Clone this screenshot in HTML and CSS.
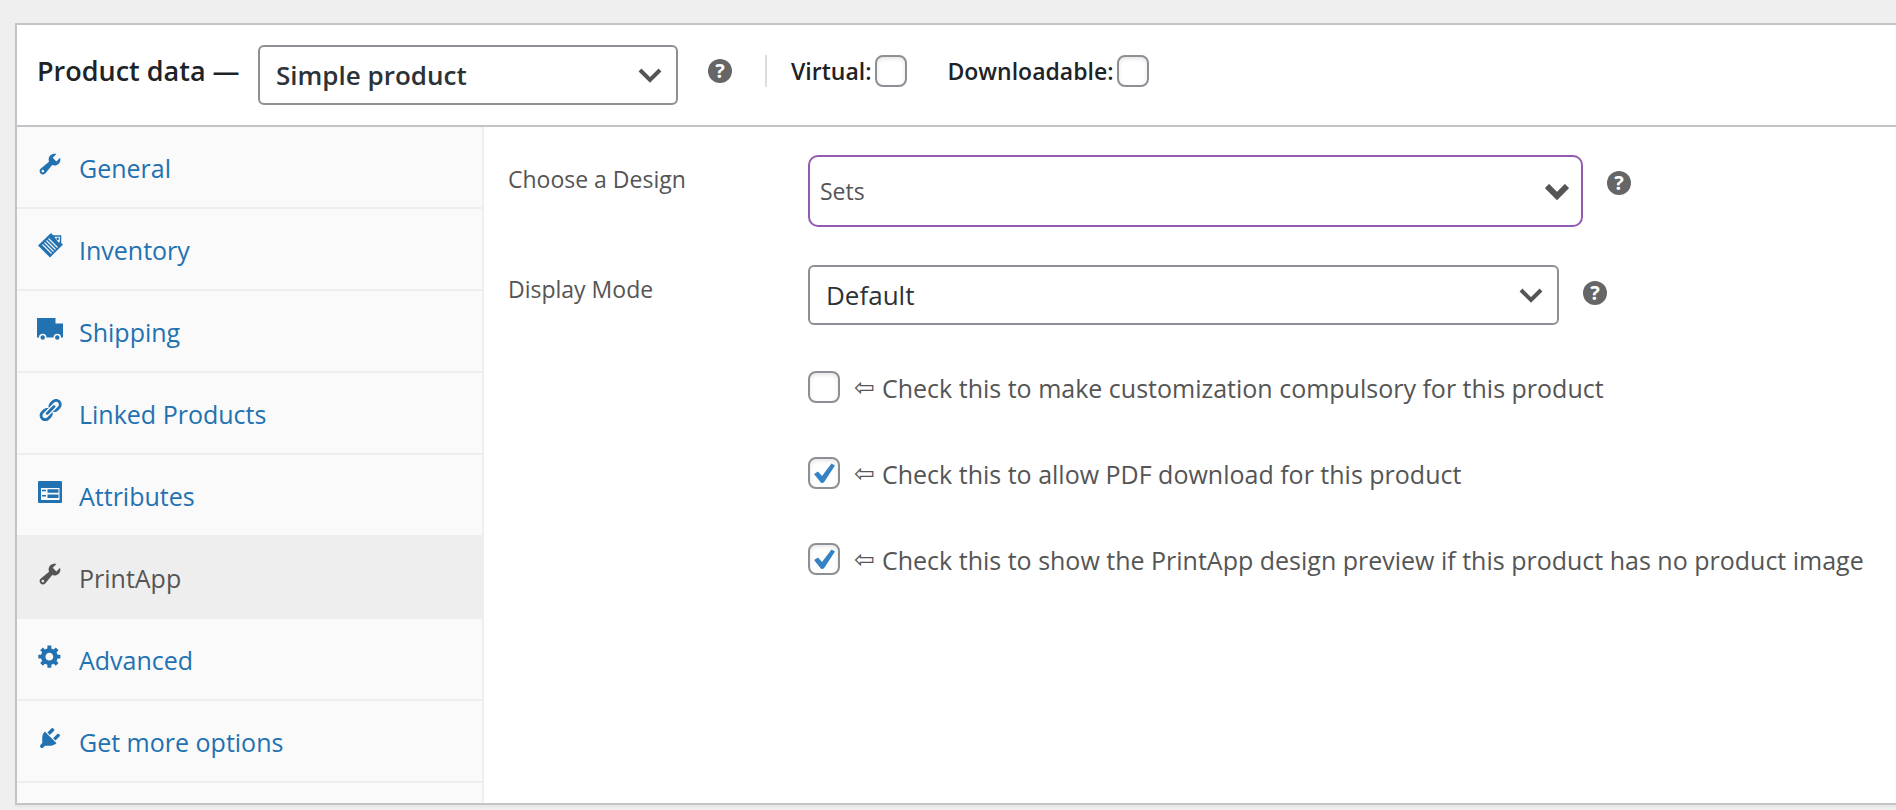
FILE: index.html
```html
<!DOCTYPE html>
<html lang="en">
<head>
<meta charset="utf-8">
<title>Product data</title>
<meta name="viewport" content="width=device-width, initial-scale=1">
<link rel="stylesheet" href="styles.css">
</head>
<body>
<svg class="sprite" aria-hidden="true">
  <symbol id="wrench" viewBox="0 0 20 20"><path d="M16.68 9.77c-1.34 1.34-3.3 1.67-4.95.99l-5.41 6.52c-.99.99-2.59.99-3.58 0s-.99-2.59 0-3.57l6.52-5.42c-.68-1.65-.35-3.61.99-4.95 1.28-1.28 3.12-1.62 4.72-1.06l-2.89 2.89 2.82 2.82 2.86-2.87c.53 1.58.18 3.39-1.08 4.65zM3.81 16.21c.4.39 1.04.39 1.43 0 .4-.4.4-1.04 0-1.43-.39-.4-1.03-.4-1.43 0-.39.39-.39 1.03 0 1.43z"/></symbol>
  <symbol id="chevron" viewBox="0 0 24 16"><path d="M2 2l10 10L22 2" fill="none" stroke="#555"/></symbol>
</svg>
<section class="panel">
  <header class="panel-header">
    <h2 class="panel-title"><label for="product-type">Product data —</label></h2>
    <div class="select-box type-box">
      <select class="select type-select" id="product-type"><option>Simple product</option><option>Variable product</option></select>
      <svg class="chevron" aria-hidden="true"><use href="#chevron"/></svg>
    </div>
    <div class="header-item help-item"><button class="help" type="button" aria-label="Help: product type">?</button></div>
    <div class="header-item divider"></div>
    <div class="header-item"><label for="virtual">Virtual:</label><input class="check" type="checkbox" id="virtual"></div>
    <div class="header-item"><label for="downloadable">Downloadable:</label><input class="check" type="checkbox" id="downloadable"></div>
  </header>
  <div class="panel-body">
    <nav class="tabs">
      <a class="tab" href="#general"><svg class="icon" aria-hidden="true"><use href="#wrench"/></svg><span>General</span></a>
      <a class="tab" href="#inventory"><svg class="icon" viewBox="0 0 26 26" aria-hidden="true"><path d="M16 3h7.500v7" fill="none" stroke="currentColor" stroke-width="1.500"/><path d="M14 0l3 3 2.500 2.500 3.500 3.500 3 2.500L13 24.500 1 12.500z"/><path d="M17.500 4h5v5.500h-1z" fill="#fafafa"/><circle cx="20.700" cy="5.700" r="1.300"/><path d="M11.500 5.500l9 9M9.500 7.500l9 9M7.500 9.500l9 9M5.500 11.500l9 9" stroke="#fafafa" stroke-width="1.100"/></svg><span>Inventory</span></a>
      <a class="tab" href="#shipping"><svg class="icon" viewBox="0 0 26 26" aria-hidden="true"><path d="M0 3h18.500v5.500H26v14H0z"/><g stroke="#fafafa" stroke-width="1.500"><circle cx="5.700" cy="22.500" r="3"/><circle cx="20.300" cy="22.500" r="3"/></g></svg><span>Shipping</span></a>
      <a class="tab" href="#linked"><svg class="icon" viewBox="0 0 20 20" aria-hidden="true"><path d="M17.740 2.760c1.680 1.690 1.680 4.410 0 6.100l-1.530 1.520c-1.120 1.120-2.700 1.470-4.140 1.090l2.620-2.610.76-.77.76-.76c.84-.84.84-2.200 0-3.040-.84-.85-2.200-.85-3.040 0l-.77.76-3.380 3.380c-.37-1.440-.02-3.020 1.100-4.140l1.520-1.530c1.690-1.680 4.420-1.680 6.100 0zM8.590 13.430l5.340-5.340c.42-.42.42-1.100 0-1.520-.44-.43-1.130-.39-1.530 0l-5.330 5.340c-.42.42-.42 1.100 0 1.520.44.43 1.130.39 1.520 0zm-.76 2.290l4.140-4.150c.38 1.440.03 3.020-1.090 4.140l-1.520 1.530c-1.690 1.680-4.410 1.680-6.100 0-1.680-1.680-1.680-4.420 0-6.100l1.530-1.520c1.120-1.120 2.700-1.470 4.140-1.100l-4.140 4.150c-.85.84-.85 2.200 0 3.050.84.84 2.200.84 3.040 0z"/></svg><span>Linked Products</span></a>
      <a class="tab" href="#attributes"><svg class="icon" viewBox="0 0 26 26" aria-hidden="true"><rect x="1" y="2" width="24" height="22" rx="1"/><path d="M4 9h18.500v12H4z" fill="#fafafa"/><path d="M10.500 10.200H21.500v3.600H10.500zM10.500 15.400H21.500V19H10.500zM5 10.700h4v1.600H5zM5 15.900h4v1.600H5z"/></svg><span>Attributes</span></a>
      <a class="tab tab-active" href="#printapp" aria-current="page"><svg class="icon" aria-hidden="true"><use href="#wrench"/></svg><span>PrintApp</span></a>
      <a class="tab" href="#advanced"><svg class="icon" viewBox="0 0 20 20" aria-hidden="true"><path d="M18 12h-2.180c-.17.7-.44 1.350-.81 1.930l1.540 1.540-2.100 2.100-1.540-1.540c-.58.36-1.230.63-1.910.79V19H8v-2.180c-.68-.16-1.330-.43-1.910-.79l-1.540 1.540-2.120-2.120 1.540-1.540c-.36-.58-.63-1.230-.79-1.910H1V9.030h2.170c.16-.7.44-1.350.8-1.940L2.430 5.550l2.100-2.100 1.540 1.540c.58-.37 1.240-.64 1.930-.81V2h3v2.180c.68.16 1.330.43 1.910.79l1.540-1.540 2.120 2.120-1.540 1.540c.36.59.64 1.240.8 1.940H18V12zm-8.500 1.500c1.660 0 3-1.340 3-3s-1.340-3-3-3-3 1.340-3 3 1.340 3 3 3z"/></svg><span>Advanced</span></a>
      <a class="tab" href="#more"><svg class="icon" viewBox="0 0 20 20" aria-hidden="true"><path d="M13.110 4.360L9.870 7.600 8 5.730l3.240-3.240c.35-.34 1.050-.2 1.560.32.52.51.66 1.210.31 1.550zm-8 1.770l.91-1.120 9.010 9.010-1.190.84c-.71.71-2.630 1.160-3.820 1.160H6.140L4.900 17.260c-.59.59-1.540.59-2.120 0-.59-.58-.59-1.530 0-2.120l1.240-1.240v-3.880c0-1.130.4-3.190 1.090-3.890zm7.260 3.970l3.240-3.240c.34-.35 1.040-.21 1.550.31.52.51.66 1.210.31 1.550l-3.240 3.250z"/></svg><span>Get more options</span></a>
    </nav>
    <form class="fields">
      <div class="field">
        <label class="field-label" for="design">Choose a Design</label>
        <div class="select-box design-box">
          <select class="select design-select" id="design"><option>Sets</option></select>
          <svg class="chevron chevron-bold" aria-hidden="true"><use href="#chevron"/></svg>
        </div>
        <button class="help field-help" type="button" aria-label="Help: design">?</button>
      </div>
      <div class="field">
        <label class="field-label" for="mode">Display Mode</label>
        <div class="select-box mode-box">
          <select class="select" id="mode"><option>Default</option></select>
          <svg class="chevron" aria-hidden="true"><use href="#chevron"/></svg>
        </div>
        <button class="help field-help" type="button" aria-label="Help: display mode">?</button>
      </div>
      <div class="options">
        <div class="option"><input class="check" type="checkbox" id="compulsory"><label class="option-label" for="compulsory"><span class="arrow">⇦</span>Check this to make customization compulsory for this product</label></div>
        <div class="option"><input class="check" type="checkbox" id="pdf" checked><label class="option-label" for="pdf"><span class="arrow">⇦</span>Check this to allow PDF download for this product</label></div>
        <div class="option"><input class="check" type="checkbox" id="preview" checked><label class="option-label" for="preview"><span class="arrow">⇦</span>Check this to show the PrintApp design preview if this product has no product image</label></div>
      </div>
    </form>
  </div>
</section>
</body>
</html>
```
FILE: styles.css
```css
* { box-sizing: border-box; }

body {
  margin: 0;
  padding: 23px 0 5px 15px;
  background: #efefef;
  color: #1d2327;
  font: 25px/32px "Open Sans", "Noto Sans", sans-serif;
}

.sprite { display: none; }

.panel {
  background: #fff;
  border: 2px solid #c3c4c7;
  border-right: 0;
  box-shadow: 0 2px 2px rgba(0, 0, 0, .04);
}

.panel-header {
  display: flex;
  align-items: flex-start;
  min-height: 102px;
  padding: 20px 0 20px 20px;
  border-bottom: 2px solid #c3c4c7;
  font-size: 23px;
  font-weight: 600;
}

.panel-title {
  flex: none;
  width: 221px;
  margin: 0;
  font-size: 27px;
  font-weight: 600;
  line-height: 52px;
  white-space: nowrap;
}

.header-item {
  display: flex;
  align-items: center;
  gap: 4px;
  height: 52px;
  margin-right: 40px;
}

.help-item { margin: 0 33px 0 30px; }

.divider {
  width: 2px;
  height: 32px;
  margin: 10px 24px 0 0;
  background: #ddd;
}

.select-box {
  position: relative;
  min-width: 0;
}

.type-box { flex: 0 1 420px; }
.design-box { flex: 0 1 775px; }
.mode-box { flex: 0 1 751px; }

.select {
  display: block;
  width: 100%;
  height: 60px;
  margin: 0;
  padding: 0 48px 0 16px;
  appearance: none;
  background: #fff;
  border: 2px solid #8c8f94;
  border-radius: 6px;
  color: #2c3338;
  font: 26px "Open Sans", "Noto Sans", sans-serif;
}

.type-select { font-weight: 600; }

.design-select {
  height: 72px;
  padding-left: 10px;
  border-color: #935ab2;
  border-radius: 10px;
  color: #555;
  font-size: 23px;
}

.chevron {
  position: absolute;
  top: 50%;
  right: 16px;
  width: 24px;
  height: 16px;
  margin-top: -7px;
  stroke-width: 4;
  pointer-events: none;
}

.chevron-bold {
  right: 14px;
  stroke-width: 6;
}

.help {
  flex: none;
  width: 24px;
  height: 24px;
  padding: 0;
  background: #666;
  border: 0;
  border-radius: 50%;
  color: #fff;
  font: bold 20px/24px "Open Sans", "Noto Sans", sans-serif;
}

.check {
  flex: none;
  width: 32px;
  height: 32px;
  margin: 0;
  appearance: none;
  background: #fff center / 28px 28px no-repeat;
  border: 2px solid #8c8f94;
  border-radius: 8px;
  box-shadow: inset 0 2px 4px rgba(0, 0, 0, .1);
}

.check:checked {
  background-image: url("data:image/svg+xml,%3Csvg xmlns='http://www.w3.org/2000/svg' viewBox='0 0 28 28'%3E%3Cpath d='M4 15L8 12.500L12 17L21.500 4.500L25 6.500L14.500 22.500Q12 25.500 10 22.500Z' fill='%233582c4'/%3E%3C/svg%3E");
}

.panel-body {
  display: flex;
  min-height: 676px;
}

.tabs {
  flex: none;
  width: 467px;
  background: #fafafa;
  border-right: 2px solid #eee;
}

.tab {
  display: flex;
  align-items: flex-start;
  gap: 16px;
  height: 82px;
  padding: 24px 20px;
  border-bottom: 2px solid #eee;
  color: #2271b1;
  line-height: 34px;
  text-decoration: none;
}

.tab-active {
  background: #eee;
  color: #555;
}

.icon {
  flex: none;
  width: 26px;
  height: 26px;
  fill: currentColor;
}

.fields {
  flex: 1;
  min-width: 0;
  padding: 28px 24px 28px;
  color: #555;
}

.field {
  display: flex;
  align-items: flex-start;
  margin-bottom: 38px;
}

.field-label {
  flex: none;
  width: 300px;
  padding-top: 8px;
  font-size: 23px;
}

.field-help { margin: 16px 0 0 24px; }

.options {
  display: grid;
  gap: 53px;
  padding: 8px 0 0 300px;
}

.option {
  display: flex;
  align-items: flex-start;
  gap: 14px;
}

.option-label {
  display: flex;
  gap: 8px;
  padding-top: 1px;
}

.arrow {
  width: 20px;
  font-family: "DejaVu Sans", sans-serif;
}
```
